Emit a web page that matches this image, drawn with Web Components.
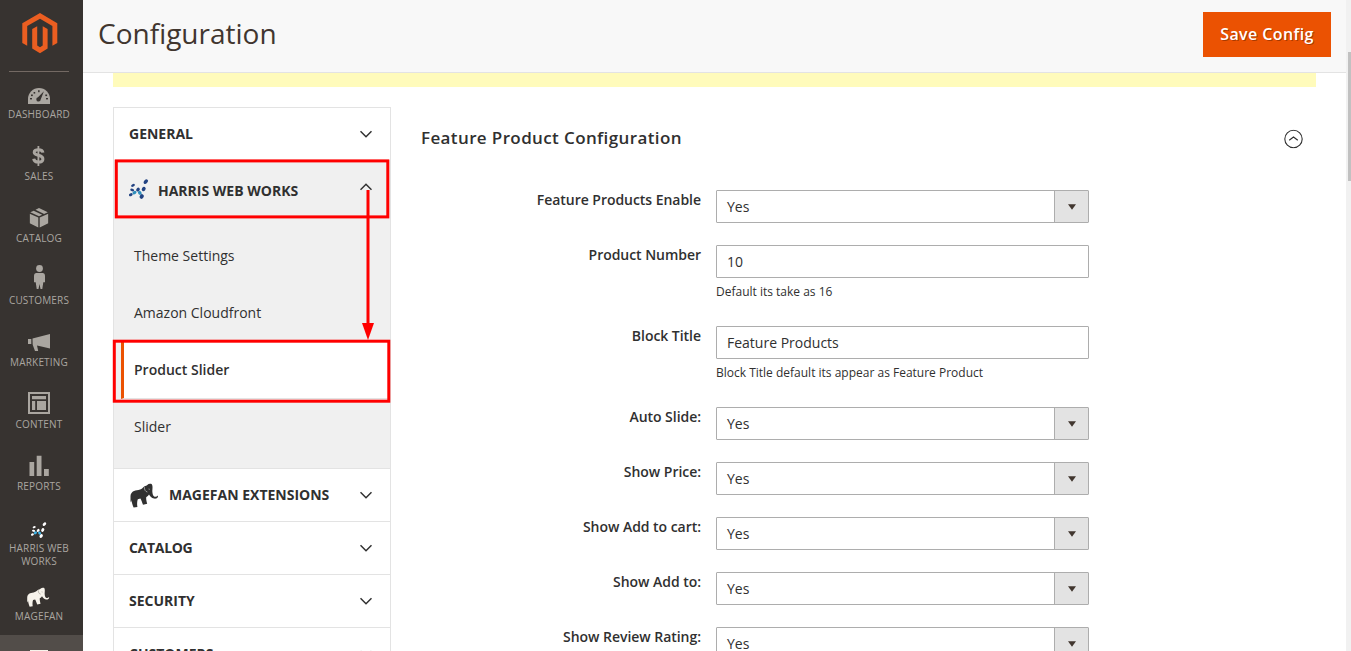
<!DOCTYPE html>
<html lang="en">
<head>
<meta charset="utf-8">
<title>Configuration</title>
<style>
html,body{margin:0;height:100%;overflow:hidden;background:#fff}
body{font-family:"Open Sans",sans-serif;color:#303030;font-size:14px}
</style>
</head>
<body>
<admin-app></admin-app>
<script>
const ICONS = {
magento:`<svg width="36" height="41" viewBox="0 0 36 41" fill="#eb5e21"><path d="M18 0 35.3 10.2V29.9L30.4 32.8V13L18 5.8 5.2 13V32.8L.3 29.9V10.2Z"/><path d="M10.2 16 15.2 13.2V32.6L18 34.3 20.7 32.6V13.2L25.6 16V35.6L18 40.3 10.2 35.6Z"/></svg>`,
dashboard:`<svg width="22" height="16" viewBox="0 0 22 16"><path fill="#aaa6a0" d="M0 16V11A11 11 0 0 1 22 11V16Z"/><g fill="#373330"><rect x="2" y="10" width="2" height="1.4"/><rect x="3" y="6.5" width="1.8" height="1.6"/><rect x="5.6" y="4" width="1.6" height="1.6"/><rect x="10.1" y="2.2" width="1.5" height="2"/><rect x="17.3" y="6.5" width="1.8" height="1.6"/><rect x="18" y="10" width="2" height="1.4"/><path d="M15.9 3.2 12.7 11.4A2.2 2.2 0 1 1 10 9.2Z"/></g></svg>`,
sales:`<svg width="13" height="20" viewBox="0 0 13 20" fill="none" stroke="#aaa6a0"><path stroke-width="3" d="M10.9 6.7C10.7 4.5 9 3.7 6.3 3.7 3.8 3.7 2.2 4.6 2.2 6.3 2.2 10.5 10.9 8 10.9 12.9 10.9 15.2 9 16.1 6.4 16.1 3.5 16.1 2 15 1.7 12.7"/><path stroke-width="1.8" d="M6.4 0V20"/></svg>`,
catalog:`<svg width="19" height="21" viewBox="0 0 19 21" fill="#aaa6a0"><path d="M.2 6.8 8.8 10.5V20.5L.2 16.3ZM18.8 6.8 10.2 10.5V20.5L18.8 16.3Z"/><path d="M.8 5.3 4.2 3.7 12.7 7.7 9.5 9.2ZM6 2.8 9.5 1 18.3 5.3 14.6 6.9Z"/></svg>`,
customers:`<svg width="12" height="24" viewBox="0 0 12 24" fill="#aaa6a0"><circle cx="6" cy="3.5" r="3.4"/><path d="M3 8H9Q11.5 8 11.5 11V17.2H9.8L8.8 24H7L6 19 5 24H3.2L2.2 17.2H.5V11Q.5 8 3 8Z"/></svg>`,
marketing:`<svg width="22" height="18" viewBox="0 0 22 18" fill="#aaa6a0"><path d="M0 5H3.3V10H0ZM4.5 4.5 22 0V14.6L9 11.4 10.2 17H7L4.7 10.7Z"/></svg>`,
content:`<svg width="22" height="22" viewBox="0 0 22 22"><path fill="none" stroke="#aaa6a0" stroke-width="2" d="M1 1H21V21H1Z"/><path fill="#aaa6a0" d="M4 4H18V7.2H4ZM4 9H7.2V18H4ZM9 9H18V18H9Z"/></svg>`,
reports:`<svg width="20" height="21" viewBox="0 0 20 21" fill="#aaa6a0"><path d="M.5 7H5.2V21H.5ZM7.7 .7H12.5V21H7.7ZM15 14H19.8V21H15Z"/></svg>`,
};
const dots = (a,b,s)=>`<svg width="${s}" height="${s}" viewBox="0 0 20 20" fill="${a}"><g><ellipse cx="16.8" cy="2.7" rx="2.6" ry="1.7" transform="rotate(-50 16.8 2.7)"/><ellipse cx="4" cy="6.4" rx="2" ry="1.3" transform="rotate(-25 4 6.4)"/><ellipse cx="3.2" cy="11" rx="2" ry="1.3" transform="rotate(15 3.2 11)"/><ellipse cx="1.8" cy="15.7" rx="1.9" ry="1.4" transform="rotate(-30 1.8 15.7)"/><ellipse cx="9" cy="10.6" rx="2.1" ry="1.6" transform="rotate(-50 9 10.6)"/><ellipse cx="14.7" cy="10" rx="2.4" ry="1.8" transform="rotate(-60 14.7 10)"/><ellipse cx="12.7" cy="17.5" rx="2.4" ry="1.9" transform="rotate(-60 12.7 17.5)"/></g><g fill="${b}"><ellipse cx="5.5" cy="13.6" rx="2.1" ry="1.7" transform="rotate(-30 5.5 13.6)"/><ellipse cx="10.8" cy="13.8" rx="2.1" ry="1.7" transform="rotate(50 10.8 13.8)"/></g></svg>`;
ICONS.harris = dots('#fff','#41b4e6',16);
ICONS.harrisColor = dots('#234382','#2f8fbd',20);
const elephant = (c,e,w,h)=>`<svg width="${w}" height="${h}" viewBox="0 0 28 25"><path fill="${c}" d="M.5 13C.8 9 4 7.3 8.5 7 11 6.5 12 5.5 13.3 4.2 14.5 3 16 3 17 2.2 18.5 .8 20.5 .5 21.8 1.3 22.8 2.5 22.6 5 22.3 8 22.4 11 23 13 24.6 13.7 26 14 27 13.6 27.6 12.6L28 13.4C27.6 15 26 16 24 15.6 21.6 15 20 13.4 19 11.6 18.4 12.8 17.4 13.6 16.2 14.2 16 16.5 16.6 18.5 17.2 20.8L13 21.8C12 19.5 11.4 17 10.4 15.6L7.8 16.2C7 18.5 7 21.5 7.4 24L3.6 24.6C2.4 22 1.6 19 1.6 17L1 19.5 .5 18Z"/><path fill="none" stroke="${e}" stroke-width=".7" d="M14.4 4.2C14.4 6.6 15.2 8.6 17.4 9M19 5.6 19.3 6.8"/></svg>`;
ICONS.magefan = elephant('#f7f3eb','#8a857c',24,20);
ICONS.magefanDark = elephant('#303030','#c4c4c4',28,25);
const chevron = up=>`<svg width="12" height="8" viewBox="0 0 12 8" fill="none" stroke="#303030" stroke-width="1.5"><path d="${up?'M.5 6.8 6 1.3 11.5 6.8':'M.5 1.2 6 6.7 11.5 1.2'}"/></svg>`;

function define(name, render){
  customElements.define(name, class extends HTMLElement{
    constructor(){ super(); this.attachShadow({mode:'open'}); }
    connectedCallback(){ this.shadowRoot.innerHTML = render(this); }
  });
}
const at = (el,n)=>el.getAttribute(n)||'';

define('menu-item', el=>`<style>
:host{display:flex;flex-direction:column;align-items:center;height:62px;box-sizing:border-box;padding-top:11px;color:#aaa6a0;font-size:10px;line-height:13px;text-align:center;letter-spacing:.18px}
:host([tall]){height:68px}
.icon{height:26px;flex:none;display:flex;align-items:center;justify-content:center}
svg{display:block}
.icon{transform:translate(var(--dx,0px),var(--shift,-1px))}
</style><span class="icon">${ICONS[at(el,'icon')]}</span><span><slot></slot></span>`);

define('side-menu', ()=>`<style>
:host{display:flex;flex-direction:column;background:#373330;width:83px;height:651px;overflow:hidden}
.logo{flex:none;box-sizing:border-box;margin:0 14px -1px 9px;border-bottom:1px solid #736963;padding:13px 0 0 1px;display:flex;justify-content:center;height:72px}
menu-item{flex:none;width:78px}
.active{background:#524d49;flex:1;display:flex;justify-content:center;padding-right:5px;padding-top:15px}
.active i{width:18px;height:4px;background:#f7f3eb}
</style>
<div class="logo">${ICONS.magento}</div>
<menu-item icon="dashboard" style="--shift:1px">DASHBOARD</menu-item>
<menu-item icon="sales" style="--dx:-1px">SALES</menu-item>
<menu-item icon="catalog" style="--shift:-2px;--dx:-.5px">CATALOG</menu-item>
<menu-item icon="customers" style="--shift:-4px;--dx:.5px">CUSTOMERS</menu-item>
<menu-item icon="marketing" style="--shift:0px">MARKETING</menu-item>
<menu-item icon="content" style="--shift:-2px">CONTENT</menu-item>
<menu-item icon="reports" style="--shift:-2px">REPORTS</menu-item>
<menu-item icon="harris" tall style="--shift:1px">HARRIS WEB<br>WORKS</menu-item>
<menu-item icon="magefan" style="--shift:0px;--dx:-1px">MAGEFAN</menu-item>
<div class="active"><i></i></div>`);

define('page-header', ()=>`<style>
:host{display:flex;justify-content:space-between;height:73px;box-sizing:border-box;background:#f8f8f8;border-bottom:1px solid #e3e3e3;padding:12px 15px 0}
h1{margin:0;font-weight:400;font-size:28px;line-height:42px;color:#41362f}
button{all:unset;box-sizing:border-box;width:128px;height:45px;padding-bottom:2px;background:#eb5202;color:#fff;font-weight:600;font-size:16px;line-height:42px;text-align:center;letter-spacing:.4px;text-shadow:1px 1px 0 rgba(0,0,0,.3)}
</style><h1>Configuration</h1><button>Save Config</button>`);

define('nav-section', el=>`<style>
:host{display:block;border-top:1px solid #e3e3e3}
header{display:flex;align-items:center;height:52px;padding:0 18px 0 15px;font-weight:700;font-size:14px;color:#303030}
:host([open]){background:#f0f0f0;border-top-color:#f0f0f0}
:host([open]) header{height:59px}
.pic{display:flex;margin-right:11px;padding-left:1px}
.pic.h{margin-right:9px;padding-left:0;transform:translateY(-2px)}
.t{flex:1;transform:translateY(-1px)}
:host([open]) .t{transform:none}
:host([open]) .chev{transform:translateY(-4px)}
.chev{display:flex}
.body{padding:8px 0 12px}
</style><header>${at(el,'icon')?`<span class="pic ${at(el,'icon')==='harrisColor'?'h':''}">${ICONS[at(el,'icon')]}</span>`:''}<span class="t">${at(el,'label')}</span><span class="chev">${chevron(el.hasAttribute('open'))}</span></header>${el.hasAttribute('open')?'<div class="body"><slot></slot></div>':''}`);

define('nav-link', ()=>`<style>
:host{display:flex;align-items:center;height:57px;padding:0 0 2px 20px;box-sizing:border-box;font-size:14px}
:host([current]){background:#fff;margin-left:7px;border-left:3px solid #eb5202;border-bottom:1px solid #e3e3e3;padding:0 0 1px 10px;font-weight:600}
</style><slot></slot>`);

define('config-nav', ()=>`<style>
:host{display:block;width:278px;box-sizing:border-box;border:1px solid #e3e3e3;border-top:0;height:600px}
</style>
<nav-section label="GENERAL"></nav-section>
<nav-section label="HARRIS WEB WORKS" icon="harrisColor" open>
<nav-link>Theme Settings</nav-link><nav-link>Amazon Cloudfront</nav-link><nav-link current>Product Slider</nav-link><nav-link>Slider</nav-link>
</nav-section>
<nav-section label="MAGEFAN EXTENSIONS" icon="magefanDark"></nav-section>
<nav-section label="CATALOG" style="letter-spacing:-.3px"></nav-section>
<nav-section label="SECURITY"></nav-section>
<nav-section label="CUSTOMERS"></nav-section>`);

define('form-row', el=>`<style>
:host{display:grid;grid-template-columns:280px 373px;column-gap:15px;margin-bottom:22px}
label{font-weight:600;text-align:right;line-height:20px;font-size:14px;letter-spacing:-.04px}
.box{height:33px;box-sizing:border-box;border:1px solid #adadad;border-radius:1px;display:flex;justify-content:space-between;line-height:32px;padding-left:10px;background:#fff}
.btn{width:33px;border-left:1px solid #adadad;background:#e3e3e3;display:flex;align-items:center;justify-content:center}
.note{font-size:12px;line-height:17px;margin:5px 0 4px}
</style><label>${at(el,'label')}</label><div><div class="box"><span>${at(el,'value')}</span>${el.hasAttribute('select')?'<span class="btn"><svg width="8" height="6" viewBox="0 0 8 6"><path fill="#41362f" d="M0 .3H8L4 5.8Z"/></svg></span>':''}</div>${at(el,'note')?`<div class="note">${at(el,'note')}</div>`:''}</div>`);

define('config-form', ()=>`<style>
:host{display:block;width:895px}
header{display:flex;justify-content:space-between;align-items:center;height:24px;padding:19px 13px 0 0;margin-bottom:40px}
h2{margin:0;font-size:17px;line-height:24px;font-weight:600;letter-spacing:.38px}
header svg{transform:translateY(.5px)}
</style>
<header><h2>Feature Product Configuration</h2><svg width="19" height="19" viewBox="0 0 19 19" fill="none" stroke="#303030"><circle cx="9.5" cy="9.5" r="8.7" stroke-width="1.1"/><path stroke-width="1.2" d="M5.2 10.8 9.5 7.5 13.8 10.8"/></svg></header>
<form-row label="Feature Products Enable" value="Yes" select></form-row>
<form-row label="Product Number" value="10" note="Default its take as 16"></form-row>
<form-row label="Block Title" value="Feature Products" note="Block Title default its appear as Feature Product"></form-row>
<form-row label="Auto Slide:" value="Yes" select></form-row>
<form-row label="Show Price:" value="Yes" select></form-row>
<form-row label="Show Add to cart:" value="Yes" select></form-row>
<form-row label="Show Add to:" value="Yes" select></form-row>
<form-row label="Show Review Rating:" value="Yes" select></form-row>`);

define('scroll-bar', ()=>`<style>
:host{display:block;box-sizing:border-box;background:#f1f1f1;padding:52px 0 0 2px;height:651px}
i{display:block;height:129px;background:#c1c1c1}
</style><i></i>`);

define('callout-marks', ()=>`<style>
:host{position:absolute;left:0;top:0;pointer-events:none}
svg{display:block}
</style><svg width="400" height="420" fill="none" stroke="#f00" stroke-width="3"><rect x="116.3" y="160.9" width="271.5" height="56"/><rect x="114.3" y="341.2" width="274.5" height="60"/><path d="M368 190V326"/><path fill="#f00" stroke="none" d="M362 323H374L368 340Z"/></svg>`);

define('admin-app', ()=>`<style>
:host{display:grid;grid-template-columns:83px 1263px 5px;height:651px;overflow:hidden;position:relative}
main{height:651px;overflow:hidden}
.notice{height:14px;background:#fffbbb;margin:0 30px 20px}
.cols{display:flex;gap:30px;padding-left:30px}
</style><side-menu></side-menu>
<main><page-header></page-header><div class="notice"></div><div class="cols"><config-nav></config-nav><config-form></config-form></div></main>
<scroll-bar></scroll-bar><callout-marks></callout-marks>`);
</script>
</body>
</html>
